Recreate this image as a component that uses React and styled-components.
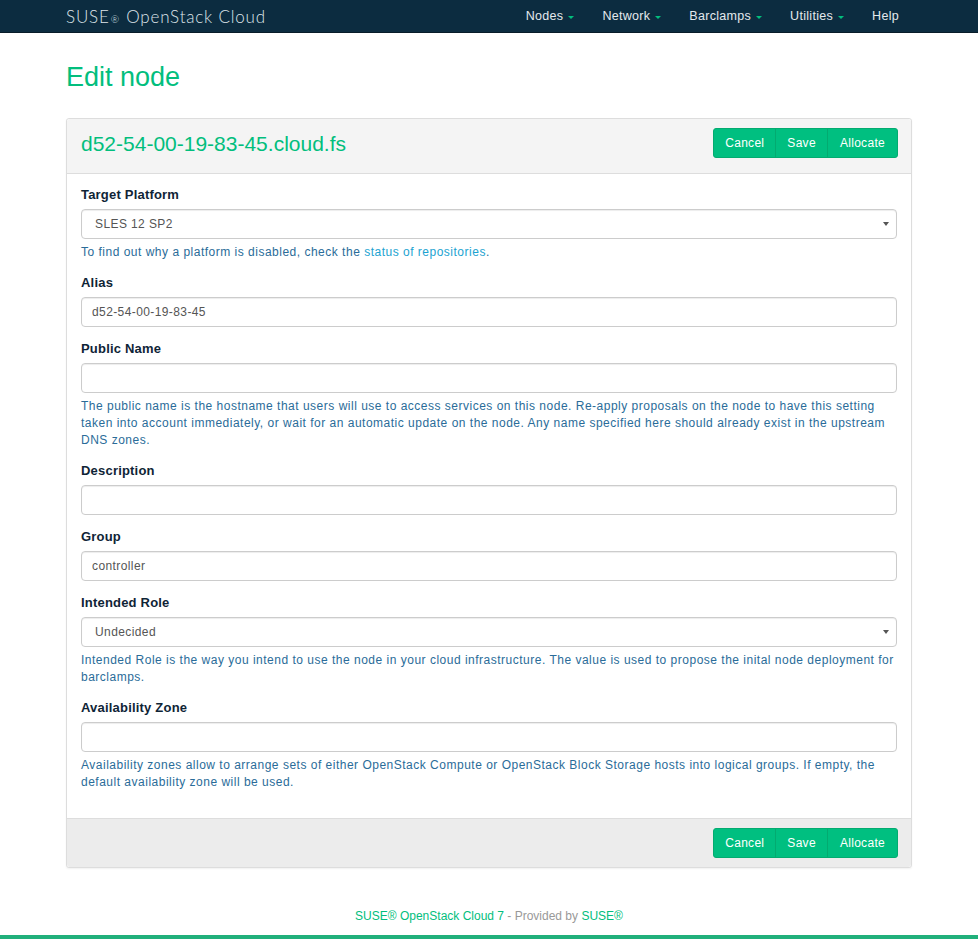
import React from 'react';
import styled, { createGlobalStyle } from 'styled-components';

const GlobalStyle = createGlobalStyle`
  html, body {
    margin: 0;
    padding: 0;
    background: #fff;
    font-family: "Liberation Sans", Arial, sans-serif;
  }
  * { box-sizing: border-box; }
`;

const GREEN = '#02be7d';

const navItems = [
    { label: 'Nodes', caret: true },
    { label: 'Network', caret: true },
    { label: 'Barclamps', caret: true },
    { label: 'Utilities', caret: true },
    { label: 'Help', caret: false },
];

const fields = [
    { label: 'Target Platform', type: 'select', value: 'SLES 12 SP2', repoHelp: true },
    { label: 'Alias', value: 'd52-54-00-19-83-45' },
    {
        label: 'Public Name',
        value: '',
        help: 'The public name is the hostname that users will use to access services on this node. Re-apply proposals on the node to have this setting taken into account immediately, or wait for an automatic update on the node. Any name specified here should already exist in the upstream DNS zones.',
    },
    { label: 'Description', value: '' },
    { label: 'Group', value: 'controller' },
    {
        label: 'Intended Role',
        type: 'select',
        value: 'Undecided',
        help: 'Intended Role is the way you intend to use the node in your cloud infrastructure. The value is used to propose the inital node deployment for barclamps.',
    },
    {
        label: 'Availability Zone',
        value: '',
        help: 'Availability zones allow to arrange sets of either OpenStack Compute or OpenStack Block Storage hosts into logical groups. If empty, the default availability zone will be used.',
    },
];

function Actions() {
    return (
        <BtnGroup>
            <Btn>Cancel</Btn>
            <Btn>Save</Btn>
            <Btn>Allocate</Btn>
        </BtnGroup>
    );
}

export default function App() {
    return (
        <Page>
            <GlobalStyle />
            <Navbar>
                <NavInner>
                    <Brand>
                        SUSE<Reg>®</Reg> OpenStack Cloud
                    </Brand>
                    <NavList>
                        {navItems.map((item) => (
                            <NavItem key={item.label}>
                                {item.label}
                                {item.caret && <Caret />}
                            </NavItem>
                        ))}
                    </NavList>
                </NavInner>
            </Navbar>

            <Container>
                <Title>Edit node</Title>
                <Panel>
                    <PanelHeading>
                        <PanelTitle>d52-54-00-19-83-45.cloud.fs</PanelTitle>
                        <Actions />
                    </PanelHeading>
                    <PanelBody>
                        {fields.map((f) => (
                            <FormGroup key={f.label}>
                                <Label>{f.label}</Label>
                                {f.type === 'select' ? (
                                    <SelectWrap>
                                        <Select defaultValue={f.value}>
                                            <option>{f.value}</option>
                                        </Select>
                                    </SelectWrap>
                                ) : (
                                    <Input defaultValue={f.value} />
                                )}
                                {f.repoHelp && (
                                    <Help>
                                        To find out why a platform is disabled, check the{' '}
                                        <HelpLink href="#">status of repositories</HelpLink>.
                                    </Help>
                                )}
                                {f.help && <Help>{f.help}</Help>}
                            </FormGroup>
                        ))}
                    </PanelBody>
                    <PanelFooter>
                        <Actions />
                    </PanelFooter>
                </Panel>
            </Container>

            <Footer>
                <FooterLink>SUSE® OpenStack Cloud 7</FooterLink> - Provided by{' '}
                <FooterLink>SUSE®</FooterLink>
            </Footer>
            <BottomBar />
        </Page>
    );
}

const Page = styled.div`
display: flex;
flex-direction: column;
min-height: 939px;
`

const Navbar = styled.header`
background: #0c2c40;
height: 33px;
border-bottom: 1px solid #081c29;
`

const NavInner = styled.div`
width: 846px;
margin: 0 auto;
height: 100%;
display: flex;
align-items: center;
justify-content: space-between;
`

const Brand = styled.div`
font-family: Lato, "Open Sans", sans-serif;
font-size: 17px;
font-weight: 300;
color: #dfe5ea;
letter-spacing: 0.8px;
`

const Reg = styled.span`
font-size: 10px;
margin: 0 1px;
`

const NavList = styled.nav`
display: flex;
height: 100%;
margin-right: -1px;
`

const NavItem = styled.a`
display: flex;
align-items: center;
padding: 0 14px;
font-size: 12.5px;
color: #e4e9ed;
letter-spacing: 0.3px;
cursor: pointer;
`

const Caret = styled.span`
display: inline-block;
margin-left: 5px;
margin-top: 2px;
border-left: 3px solid transparent;
border-right: 3px solid transparent;
border-top: 3px solid ${GREEN};
`

const Container = styled.main`
width: 846px;
margin: 0 auto;
`

const Title = styled.h1`
margin: 29px 0 25px;
font-size: 27px;
font-weight: 400;
line-height: 31px;
color: ${GREEN};
`

const Panel = styled.section`
border: 1px solid #dddddd;
border-radius: 3px;
box-shadow: 0 1px 2px rgba(0, 0, 0, 0.06);
background: #fff;
`

const PanelHeading = styled.div`
display: flex;
align-items: flex-start;
justify-content: space-between;
height: 55px;
padding: 9px 13px 0 14px;
background: #f4f4f4;
border-bottom: 1px solid #dddddd;
border-radius: 3px 3px 0 0;
`

const PanelTitle = styled.h2`
margin: 0;
font-size: 21px;
line-height: 32px;
font-weight: 400;
color: ${GREEN};
`

const BtnGroup = styled.div`
display: flex;
`

const Btn = styled.button`
height: 30px;
padding: 0 11px;
border: 1px solid #03ab70;
background: #00bf80;
color: #fff;
font-family: "Liberation Sans", Arial, sans-serif;
font-size: 12px;
letter-spacing: 0.3px;
margin-left: -1px;
cursor: pointer;

&:first-child {
    border-radius: 3px 0 0 3px;
    margin-left: 0;
}
&:last-child {
    border-radius: 0 3px 3px 0;
    padding: 0 12px;
}
`

const PanelBody = styled.div`
padding: 12px 14px 14px;
`

const FormGroup = styled.div`
margin-bottom: 13px;
`

const Label = styled.label`
display: block;
font-size: 13px;
font-weight: 700;
line-height: 17px;
color: #0f2436;
letter-spacing: 0.2px;
margin-bottom: 6px;
`

const fieldBase = `
display: block;
width: 100%;
height: 30px;
border: 1px solid #cccccc;
border-radius: 4px;
box-shadow: inset 0 1px 1px rgba(0, 0, 0, 0.075);
background: #fff;
font-family: "Liberation Sans", Arial, sans-serif;
font-size: 12px;
letter-spacing: 0.4px;
color: #555555;
outline: none;
`

const Input = styled.input`
${fieldBase}
padding: 0 10px;
`

const SelectWrap = styled.div`
position: relative;

&::after {
    content: '';
    position: absolute;
    right: 8px;
    top: 13px;
    border-left: 3px solid transparent;
    border-right: 3px solid transparent;
    border-top: 4px solid #555;
    pointer-events: none;
}
`

const Select = styled.select`
${fieldBase}
appearance: none;
-webkit-appearance: none;
padding: 0 13px;
`

const Help = styled.p`
margin: 5px 0 0;
font-size: 12px;
line-height: 17px;
color: #2a6c99;
letter-spacing: 0.5px;
`

const HelpLink = styled.a`
color: #1ca3d1;
text-decoration: none;
`

const PanelFooter = styled.div`
display: flex;
justify-content: flex-end;
padding: 9px 13px 9px 14px;
background: #ececec;
border-top: 1px solid #dddddd;
border-radius: 0 0 3px 3px;
`

const Footer = styled.footer`
margin-top: 40px;
padding-bottom: 10px;
text-align: center;
font-size: 12px;
line-height: 17px;
color: #999999;
`

const FooterLink = styled.a`
color: ${GREEN};
`

const BottomBar = styled.div`
margin-top: auto;
height: 6px;
background: #21b07b;
`
